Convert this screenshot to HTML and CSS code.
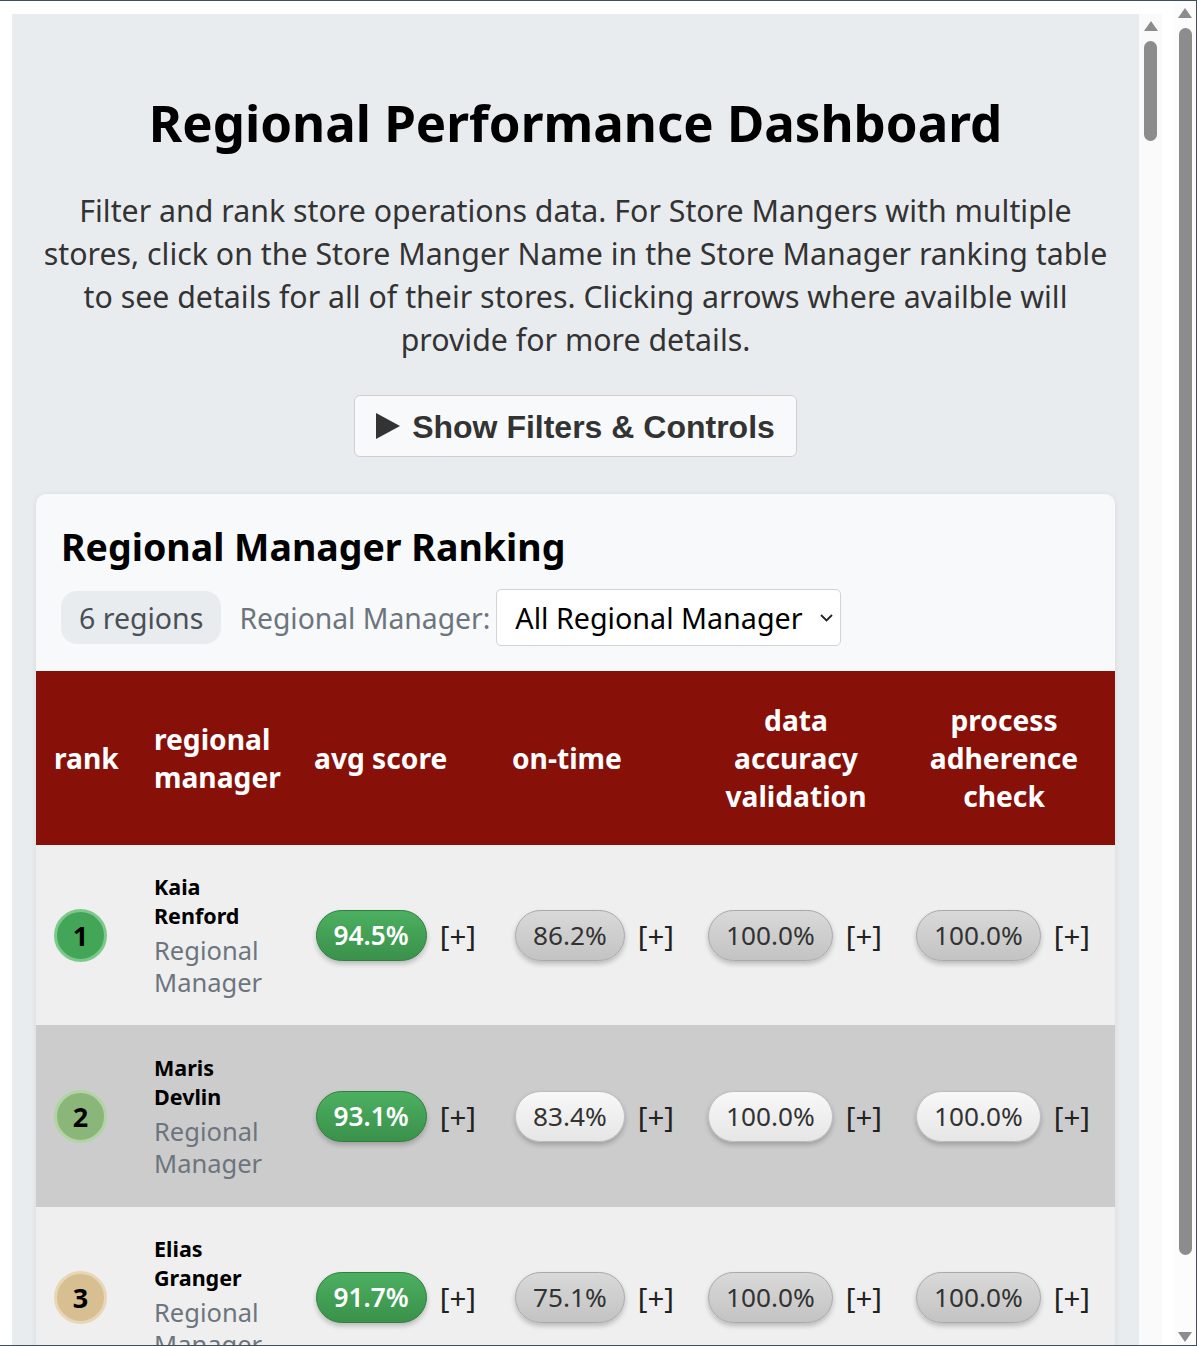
FILE: index.html
```html
<!DOCTYPE html>
<html lang="en">
<head>
<meta charset="utf-8">
<title>Regional Performance Dashboard</title>
<link rel="stylesheet" href="styles.css">
</head>
<body>
<div class="page">
  <div class="app">
    <main class="app-scroll">
      <header class="intro">
        <h1 class="title">Regional Performance Dashboard</h1>
        <p class="lead">Filter and rank store operations data. For Store Mangers with multiple<br>stores, click on the Store Manger Name in the Store Manager ranking table<br>to see details for all of their stores. Clicking arrows where availble will<br>provide for more details.</p>
        <div class="toggle-row">
          <button class="toggle" type="button">
            <svg class="toggle-icon" viewBox="0 0 24 26" width="24" height="26" aria-hidden="true"><polygon points="0,0 24,13 0,26" fill="#333"/></svg>
            <span>Show Filters &amp; Controls</span>
          </button>
        </div>
      </header>

      <section class="card">
        <div class="card-head">
          <h2 class="card-title">Regional Manager Ranking</h2>
          <div class="filters">
            <span class="count">6 regions</span>
            <span class="filter-group">
              <label class="filter-label" for="rm">Regional Manager:</label>
              <span class="select-wrap">
                <select id="rm" class="select"><option>All Regional Manager</option></select>
                <svg class="chev" viewBox="0 0 13 8" width="13" height="8" aria-hidden="true"><polyline points="1,1 6.5,6.5 12,1" fill="none" stroke="#222" stroke-width="1.8"/></svg>
              </span>
            </span>
          </div>
        </div>
        <table class="rank-table">
          <colgroup>
            <col class="c-rank"><col class="c-name"><col class="c-avg"><col class="c-on"><col class="c-data"><col class="c-proc">
          </colgroup>
          <thead>
            <tr>
              <th class="th-left">rank</th>
              <th class="th-left">regional manager</th>
              <th class="th-left">avg score</th>
              <th class="th-left">on-time</th>
              <th>data accuracy validation</th>
              <th class="th-last">process adherence check</th>
            </tr>
          </thead>
          <tbody>
            <tr class="row-light">
              <td><span class="rank r1">1</span></td>
              <td><div class="name">Kaia Renford</div><div class="role">Regional Manager</div></td>
              <td><div class="metric"><span class="pill pill-green">94.5%</span><span class="more">[+]</span></div></td>
              <td><div class="metric"><span class="pill pill-gray">86.2%</span><span class="more">[+]</span></div></td>
              <td><div class="metric"><span class="pill pill-gray">100.0%</span><span class="more">[+]</span></div></td>
              <td class="td-last"><div class="metric"><span class="pill pill-gray">100.0%</span><span class="more">[+]</span></div></td>
            </tr>
            <tr class="row-dark">
              <td><span class="rank r2">2</span></td>
              <td><div class="name">Maris Devlin</div><div class="role">Regional Manager</div></td>
              <td><div class="metric"><span class="pill pill-green">93.1%</span><span class="more">[+]</span></div></td>
              <td><div class="metric"><span class="pill pill-light">83.4%</span><span class="more">[+]</span></div></td>
              <td><div class="metric"><span class="pill pill-light">100.0%</span><span class="more">[+]</span></div></td>
              <td class="td-last"><div class="metric"><span class="pill pill-light">100.0%</span><span class="more">[+]</span></div></td>
            </tr>
            <tr class="row-light">
              <td><span class="rank r3">3</span></td>
              <td><div class="name">Elias Granger</div><div class="role">Regional Manager</div></td>
              <td><div class="metric"><span class="pill pill-green">91.7%</span><span class="more">[+]</span></div></td>
              <td><div class="metric"><span class="pill pill-gray">75.1%</span><span class="more">[+]</span></div></td>
              <td><div class="metric"><span class="pill pill-gray">100.0%</span><span class="more">[+]</span></div></td>
              <td class="td-last"><div class="metric"><span class="pill pill-gray">100.0%</span><span class="more">[+]</span></div></td>
            </tr>
            <tr class="row-dark">
              <td><span class="rank r4">4</span></td>
              <td><div class="name">Tobin Ashcroft</div><div class="role">Regional Manager</div></td>
              <td><div class="metric"><span class="pill pill-light">89.6%</span><span class="more">[+]</span></div></td>
              <td><div class="metric"><span class="pill pill-light">72.8%</span><span class="more">[+]</span></div></td>
              <td><div class="metric"><span class="pill pill-light">98.5%</span><span class="more">[+]</span></div></td>
              <td class="td-last"><div class="metric"><span class="pill pill-light">100.0%</span><span class="more">[+]</span></div></td>
            </tr>
            <tr class="row-light">
              <td><span class="rank r4">5</span></td>
              <td><div class="name">Nadia Quell</div><div class="role">Regional Manager</div></td>
              <td><div class="metric"><span class="pill pill-gray">88.3%</span><span class="more">[+]</span></div></td>
              <td><div class="metric"><span class="pill pill-gray">70.4%</span><span class="more">[+]</span></div></td>
              <td><div class="metric"><span class="pill pill-gray">97.9%</span><span class="more">[+]</span></div></td>
              <td class="td-last"><div class="metric"><span class="pill pill-gray">99.2%</span><span class="more">[+]</span></div></td>
            </tr>
            <tr class="row-dark">
              <td><span class="rank r4">6</span></td>
              <td><div class="name">Rowan Pike</div><div class="role">Regional Manager</div></td>
              <td><div class="metric"><span class="pill pill-light">86.9%</span><span class="more">[+]</span></div></td>
              <td><div class="metric"><span class="pill pill-light">68.0%</span><span class="more">[+]</span></div></td>
              <td><div class="metric"><span class="pill pill-light">96.4%</span><span class="more">[+]</span></div></td>
              <td class="td-last"><div class="metric"><span class="pill pill-light">98.7%</span><span class="more">[+]</span></div></td>
            </tr>
          </tbody>
        </table>
      </section>

      <section class="card">
        <div class="card-head">
          <h2 class="card-title">Store Manager Ranking</h2>
        </div>
      </section>
    </main>

    <div class="rail rail-inner" aria-hidden="true">
      <svg class="rail-arrow" viewBox="0 0 14 10" width="14" height="10"><polygon points="0,10 7,0 14,10" fill="#8c8c8c"/></svg>
      <div class="rail-thumb rail-thumb-inner"></div>
    </div>
  </div>
</div>

<div class="rail rail-outer" aria-hidden="true">
  <svg class="rail-arrow" viewBox="0 0 14 10" width="14" height="10"><polygon points="0,10 7,0 14,10" fill="#8c8c8c"/></svg>
  <div class="rail-thumb rail-thumb-outer"></div>
  <svg class="rail-arrow rail-arrow-down" viewBox="0 0 14 10" width="14" height="10"><polygon points="0,0 14,0 7,10" fill="#8c8c8c"/></svg>
</div>
</body>
</html>
```

FILE: styles.css
```css
:root {
  --ui: "Noto Sans", "Open Sans", "DejaVu Sans", sans-serif;
}

html,
body {
  height: 100%;
}

body {
  margin: 0;
  box-sizing: border-box;
  height: 100vh;
  display: flex;
  overflow: hidden;
  border-top: 1px solid #3e505a;
  border-right: 1px solid #3e505a;
  border-bottom: 1px solid #3e505a;
  background: #ffffff;
  font-family: var(--ui);
  color: #212529;
}

.page {
  flex: 1;
  min-width: 0;
  padding: 13px 12px 0;
  overflow: hidden;
}

.app {
  display: flex;
  height: 1410px;
  background: #e9ecef;
}

.app-scroll {
  flex: 1;
  min-width: 0;
  padding: 24px 24px 40px;
  overflow: hidden;
}

/* Scroll rails (visual scrollbars) */
.rail {
  flex: none;
  width: 23px;
  display: flex;
  flex-direction: column;
  align-items: center;
  background: #fafafa;
}

.rail-arrow {
  display: block;
  flex: none;
  margin-top: 7px;
}

.rail-thumb {
  flex: none;
  width: 13px;
  margin-top: 10px;
  border-radius: 7px;
  background: #8c8c8c;
}

.rail-thumb-inner {
  height: 100px;
}

.rail-outer {
  width: 22px;
  background: #fcfcfc;
}

.rail-thumb-outer {
  height: 1227px;
}

.rail-arrow-down {
  margin-top: auto;
  margin-bottom: 3px;
}

/* Intro */
.intro {
  text-align: center;
}

.title {
  margin: 53px 0 0;
  font-size: 51px;
  line-height: 62px;
  font-weight: 700;
  color: #000;
}

.lead {
  margin: 36px 0 0;
  font-size: 30.3px;
  line-height: 43px;
  color: #333;
  white-space: nowrap;
}

.toggle-row {
  display: flex;
  justify-content: center;
  margin-top: 34px;
}

.toggle {
  display: inline-flex;
  align-items: center;
  gap: 12px;
  height: 62px;
  box-sizing: border-box;
  padding: 3px 21px 0;
  border: 1px solid #cfcfcf;
  border-radius: 6px;
  background: #f8f9fa;
  font: 700 32px "Liberation Sans", Arial, sans-serif;
  color: #333;
  cursor: pointer;
}

.toggle-icon {
  display: block;
  margin-top: -3px;
}

/* Card */
.card {
  margin-top: 37px;
  background: #f8f9fa;
  border-radius: 10px;
  box-shadow: 0 1px 6px rgba(0, 0, 0, 0.08);
  overflow: hidden;
}

.card-head {
  padding: 29px 25px 25px;
}

.card-title {
  margin: 0;
  font-size: 37.5px;
  line-height: 47px;
  font-weight: 700;
  color: #000;
}

.filters {
  margin-top: 19px;
  display: flex;
  align-items: center;
  gap: 18px;
}

.count {
  display: inline-flex;
  align-items: center;
  height: 53px;
  padding: 0 18px;
  border-radius: 16px;
  background: #e9ecef;
  color: #495057;
  font-size: 28.5px;
}

.filter-group {
  display: inline-flex;
  align-items: center;
  gap: 6px;
}

.filter-label {
  color: #6c757d;
  font-size: 28.3px;
}

.select-wrap {
  position: relative;
  display: inline-flex;
}

.select {
  appearance: none;
  -webkit-appearance: none;
  height: 57px;
  padding: 0 37px 0 18px;
  border: 1px solid #ced4da;
  border-radius: 5px;
  background: #fff;
  font-family: var(--ui);
  font-size: 28.7px;
  color: #000;
}

.chev {
  position: absolute;
  right: 8px;
  top: 25px;
  pointer-events: none;
}

/* Table */
.rank-table {
  width: 100%;
  border-collapse: collapse;
  table-layout: fixed;
}

.c-rank { width: 100px; }
.c-name { width: 160px; }
.c-avg { width: 198px; }
.c-on { width: 198px; }
.c-data { width: 208px; }
.c-proc { width: 215px; }

.rank-table th {
  background: #871009;
  color: #fff;
  font-weight: 700;
  font-size: 28.2px;
  line-height: 38px;
  padding: 30px 18px;
  text-align: center;
  vertical-align: middle;
}

.rank-table th.th-left {
  text-align: left;
}

.rank-table th.th-last,
.rank-table td.td-last {
  padding-right: 25px;
}

.rank-table td {
  padding: 27px 18px;
  vertical-align: middle;
}

.row-light td {
  background: #efefef;
}

.row-dark td {
  background: #cccccc;
}

.row-dark td {
  padding-top: 28px;
  padding-bottom: 28px;
}

.rank {
  display: inline-flex;
  align-items: center;
  justify-content: center;
  width: 53px;
  height: 53px;
  box-sizing: border-box;
  border-radius: 50%;
  border: 3px solid;
  font-size: 27px;
  font-weight: 700;
  color: #000;
}

.r1 { background: #43a558; border-color: #7dc98b; }
.r2 { background: #8bb67a; border-color: #b2d4a4; }
.r3 { background: #d8bf91; border-color: #e8d6b6; }
.r4 { background: #c9ccd0; border-color: #dde0e3; }

.name {
  width: min-content;
  font-size: 21.5px;
  line-height: 29px;
  font-weight: 700;
  color: #000;
}

.role {
  width: min-content;
  margin-top: 4px;
  font-size: 25.5px;
  line-height: 32px;
  color: #6c757d;
}

.metric {
  display: flex;
  justify-content: flex-end;
  align-items: center;
  gap: 13px;
}

.pill {
  display: inline-flex;
  align-items: center;
  height: 51px;
  box-sizing: border-box;
  padding: 0 17px;
  border: 1px solid;
  border-radius: 26px;
  font-size: 26.2px;
  white-space: nowrap;
  box-shadow: 0 3px 5px rgba(0, 0, 0, 0.22);
}

.pill-green {
  background: linear-gradient(#4caf60, #3a914b);
  border-color: #2f7f3f;
  color: #fff;
  font-weight: 600;
}

.pill-gray {
  background: linear-gradient(#d9d9d9, #c3c3c3);
  border-color: #a9a9a9;
  color: #333;
}

.pill-light {
  background: linear-gradient(#f8f8f8, #e6e6e6);
  border-color: #bcbcbc;
  color: #333;
}

.more {
  font-size: 29.5px;
  color: #222;
  white-space: nowrap;
}
```
